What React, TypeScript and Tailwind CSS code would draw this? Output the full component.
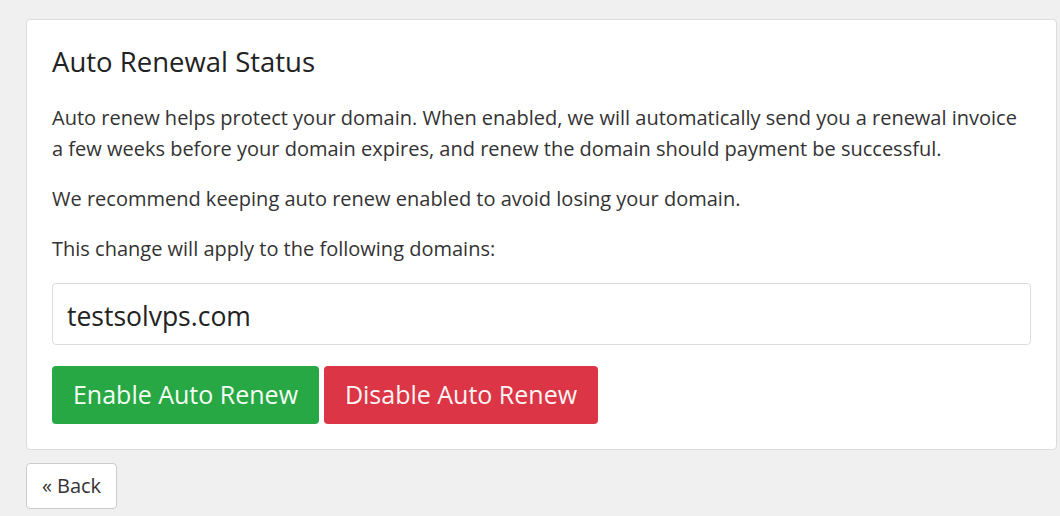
import React from "react";

const App = () => {
  return (
    <div
      className="min-h-[516px] w-[1060px] bg-[#f0f0f0] pl-[26px] pr-[3px] pt-[19px] text-[#333]"
      style={{ fontFamily: '"Open Sans", sans-serif' }}
    >
      <div className="rounded-[4px] border border-[#dcdcdc] bg-white px-[25px] pb-[25px] pt-[25px]">
        <h2 className="text-[27.5px] leading-[33px] text-[#222]">Auto Renewal Status</h2>
        <p className="mt-[24px] text-[20px] leading-[31px]">
          Auto renew helps protect your domain. When enabled, we will automatically send you a renewal invoice a few
          weeks before your domain expires, and renew the domain should payment be successful.
        </p>
        <p className="mt-[19px] text-[20px] leading-[31px]">
          We recommend keeping auto renew enabled to avoid losing your domain.
        </p>
        <p className="mt-[19px] text-[20px] leading-[31px]">This change will apply to the following domains:</p>
        <div className="mt-[19px] flex h-[62px] items-center rounded-[4px] border border-[#dcdcdc] bg-white px-[14px] pt-[5px] text-[26.5px] text-[#222]">
          testsolvps.com
        </div>
        <div className="mt-[21px] flex gap-[5px]">
          <button className="h-[58px] w-[267px] rounded-[4px] bg-[#28a745] text-[25px] text-[#f4fff4]">
            Enable Auto Renew
          </button>
          <button className="h-[58px] w-[274px] rounded-[4px] bg-[#dc3545] text-[25px] text-[#fff4f4]">
            Disable Auto Renew
          </button>
        </div>
      </div>
      <button className="mt-[13px] h-[46px] w-[91px] rounded-[4px] border border-[#cccccc] bg-white text-[20px] text-[#333]">
        « Back
      </button>
    </div>
  );
};

export default App;
